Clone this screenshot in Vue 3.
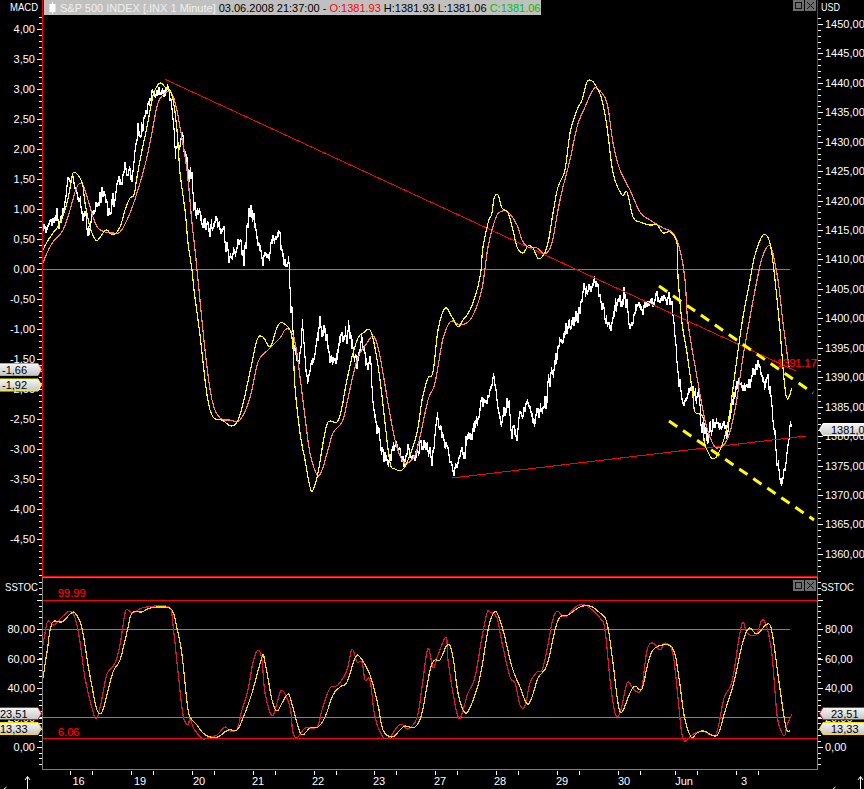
<template>
  <div class="chart">
    <!-- MACD / price panel -->
    <div class="row main">
      <svg class="axis-l" viewBox="0 0 42 577" width="42" height="577">
        <path :d="macdMinor" class="tick" />
        <path :d="macdMajor" class="tick" />
        <text x="10" y="11" class="lbl" textLength="28" lengthAdjust="spacingAndGlyphs">MACD</text>
        <text v-for="t in macdLabels" :key="t.txt" x="35" :y="t.y + 4" class="lbl end">{{ t.txt }}</text>
        <g v-for="t in macdTags" :key="t.txt">
          <polygon :points="tagLeft(t.y)" :stroke="t.color" fill="url(#tagL)" />
          <text x="2" :y="t.y + 10.5" class="tagtxt">{{ t.txt }}</text>
        </g>
        <defs>
          <linearGradient id="tagL" x1="0" y1="0" x2="0" y2="1">
            <stop offset="0" stop-color="#f6f6f6" />
            <stop offset="1" stop-color="#c6c6c6" />
          </linearGradient>
        </defs>
      </svg>

      <div class="plot plot-main">
        <svg viewBox="43 0 774 576" width="774" height="576">
          <line x1="43" y1="269.5" x2="790" y2="269.5" class="gray" />
          <path :d="pricePath" class="price" />
          <line x1="165.5" y1="79.5" x2="796" y2="371" class="red" />
          <line x1="452" y1="478" x2="806" y2="436" class="red" />
          <polyline :points="macdPink" class="pink" />
          <polyline :points="macdYellow" class="yellow" />
          <line x1="659" y1="286" x2="813" y2="393" class="dash" />
          <line x1="669" y1="421" x2="814" y2="520" class="dash" />
          <text x="777" y="367" class="redtxt">1391.17</text>
        </svg>
        <div class="head">
          <svg class="candle" viewBox="0 0 7 12" width="7" height="12">
            <rect x="3" y="0" width="1" height="12" fill="#fff" />
            <rect x="0.5" y="2" width="6" height="8" fill="#fff" />
          </svg>
          <span class="name">S&amp;P 500 INDEX [.INX  1 Minute]</span>
          <span class="stamp">03.06.2008 21:37:00 - </span>
          <span class="o">O:1381.93</span>
          <span> H:1381.93 L:1381.06 </span>
          <span class="c">C:1381.06</span>
        </div>
        <div class="winbtns">
          <svg class="btn" viewBox="0 0 11 11" width="11" height="11">
            <rect x="2.5" y="2.5" width="6" height="6" class="ico" />
          </svg>
          <svg class="btn" viewBox="0 0 11 11" width="11" height="11">
            <path d="M2 2L9 9M9 2L2 9" class="ico" />
          </svg>
        </div>
      </div>

      <svg class="axis-r" viewBox="818 0 46 577" width="46" height="577">
        <path :d="usdMinor" class="tick" />
        <path :d="usdMajor" class="tick" />
        <text x="821" y="11" class="lbl" textLength="19" lengthAdjust="spacingAndGlyphs">USD</text>
        <text v-for="t in usdLabels" :key="t.txt" x="825" :y="t.y + 4" class="lbl">{{ t.txt }}</text>
        <polygon :points="tagRight(423)" stroke="#ffffff" fill="url(#tagR)" />
        <text x="831" y="433.5" class="tagtxt">1381,00</text>
        <defs>
          <linearGradient id="tagR" x1="0" y1="0" x2="0" y2="1">
            <stop offset="0" stop-color="#f6f6f6" />
            <stop offset="1" stop-color="#c6c6c6" />
          </linearGradient>
        </defs>
      </svg>
    </div>

    <!-- Slow stochastic panel -->
    <div class="row lower">
      <svg class="axis-l" viewBox="0 577 42 193" width="42" height="193">
        <path :d="stocMinorL" class="tick" />
        <path :d="stocMajorL" class="tick" />
        <text x="5" y="591" class="lbl" textLength="33" lengthAdjust="spacingAndGlyphs">SSTOC</text>
        <text v-for="t in stocLabels" :key="t.txt" x="35" :y="t.y + 4" class="lbl end">{{ t.txt }}</text>
        <g v-for="t in stocTags" :key="t.txt">
          <polygon :points="tagLeft(t.y)" :stroke="t.color" fill="url(#tagL2)" />
          <text x="0" :y="t.y + 10.5" class="tagtxt">{{ t.txt }}</text>
        </g>
        <defs>
          <linearGradient id="tagL2" x1="0" y1="0" x2="0" y2="1">
            <stop offset="0" stop-color="#f6f6f6" />
            <stop offset="1" stop-color="#c6c6c6" />
          </linearGradient>
        </defs>
      </svg>

      <div class="plot plot-lower">
        <svg viewBox="43 578 774 191" width="774" height="191">
          <line x1="43" y1="600.5" x2="817" y2="600.5" class="red" />
          <line x1="43" y1="738.5" x2="817" y2="738.5" class="red" />
          <line x1="43" y1="629.5" x2="790" y2="629.5" class="gray" />
          <line x1="43" y1="717.5" x2="790" y2="717.5" class="gray" />
          <polyline :points="stocRed" class="crimson" />
          <polyline :points="stocGold" class="gold" />
          <text x="58" y="597" class="redtxt">99.99</text>
          <text x="58" y="736" class="redtxt">6.06</text>
        </svg>
        <div class="winbtns low">
          <svg class="btn" viewBox="0 0 11 11" width="11" height="11">
            <rect x="2.5" y="2.5" width="6" height="6" class="ico" />
          </svg>
          <svg class="btn" viewBox="0 0 11 11" width="11" height="11">
            <path d="M2 2L9 9M9 2L2 9" class="ico" />
          </svg>
        </div>
      </div>

      <svg class="axis-r" viewBox="818 577 46 193" width="46" height="193">
        <path :d="stocMinorR" class="tick" />
        <path :d="stocMajorR" class="tick" />
        <text x="821" y="591" class="lbl" textLength="33" lengthAdjust="spacingAndGlyphs">SSTOC</text>
        <text v-for="t in stocLabels" :key="t.txt" x="825" :y="t.y + 4" class="lbl">{{ t.txt }}</text>
        <g v-for="t in stocTags" :key="t.txt">
          <polygon :points="tagRight(t.y)" :stroke="t.color" fill="url(#tagL2)" />
          <text x="831" :y="t.y + 10.5" class="tagtxt">{{ t.txt }}</text>
        </g>
      </svg>
    </div>

    <!-- Time axis -->
    <svg class="time" viewBox="0 770 864 19" width="864" height="19">
      <path :d="timeTicks" class="tick" />
      <text v-for="d in days" :key="d.txt" :x="d.x" y="785" class="lbl mid">{{ d.txt }}</text>
      <path d="M27.5 789V777M25 780L27.5 776.5L30 780M860.5 789V777M858 780L860.5 776.5L863 780" class="arrow" />
      <path d="M4 789L6.5 787M833 789L835.5 787" class="arrow" />
    </svg>
  </div>
</template>

<script setup>
// line data, traced in page coordinates
const macdYellow = smooth([
  43,250, 47,242, 53,233, 60,223, 67,203, 71,183, 74,172, 82,182, 85,203, 90,227, 95,239, 98,240,
  103,233, 107,230, 113,235, 120,227, 125,210, 130,198, 134,195, 137,177, 142,150, 147,127, 152,100,
  155,90, 160,83, 165,87, 172,95, 177,130, 180,173, 185,210, 188,243, 192,270, 194,290, 200,335, 207,395,
  213,417, 222,420, 232,426, 240,415, 250,372, 257,340, 263,337, 270,347, 276,330, 280,323, 283,323, 290,330,
  293,347, 295,387, 300,433, 305,460, 310,487, 313,490, 318,473, 323,443, 328,422, 337,422, 342,407,
  345,390, 352,357, 358,338, 363,333, 370,330, 375,348, 380,380, 385,423, 390,463, 395,469, 402,470,
  408,460, 417,433, 422,400, 428,378, 433,372, 438,330, 445,308, 452,317, 458,327, 463,320, 470,310,
  477,290, 481,270, 483,247, 488,223, 492,213, 494,198, 498,195, 502,208, 508,213, 513,230, 517,247,
  523,253, 528,246, 533,248, 539,259, 547,247, 553,213, 558,187, 565,170, 570,133, 577,110, 582,100,
  587,82, 592,81, 597,88, 602,100, 607,127, 613,173, 622,195, 627,192, 633,217, 640,222, 650,225,
  657,225, 663,233, 670,232, 677,243, 678,277, 682,323, 687,353, 693,397, 695,412, 703,417, 704,440,
  707,450, 713,459, 720,450, 728,423, 735,373, 742,323, 750,280, 755,255, 763,235, 770,243, 775,280,
  780,330, 786,396, 792,388
])
const macdPink = smooth([
  43,263, 47,253, 53,242, 63,230, 70,210, 75,192, 79,184, 83,185, 88,200, 93,217, 98,228, 105,232,
  112,233, 120,232, 127,220, 133,205, 140,183, 147,157, 153,127, 158,103, 165,93, 170,92, 175,102,
  180,127, 187,170, 192,223, 195,250, 198,280, 205,350, 212,400, 220,418, 230,420, 240,420, 250,398,
  258,362, 268,350, 280,338, 285,330, 290,330, 295,342, 300,377, 305,417, 310,453, 317,475, 322,470,
  328,450, 333,433, 342,422, 347,403, 352,380, 358,357, 367,343, 373,336, 378,347, 383,373, 388,403,
  395,440, 402,460, 408,463, 415,455, 420,437, 428,400, 435,383, 442,343, 448,325, 453,321, 460,325,
  470,320, 478,303, 483,283, 488,247, 495,220, 500,212, 508,212, 517,225, 522,240, 528,247, 537,248,
  545,254, 552,243, 558,210, 563,187, 570,160, 577,127, 585,107, 593,90, 598,89, 607,103, 613,143,
  620,170, 630,190, 640,212, 650,220, 663,228, 673,233, 680,250, 685,280, 688,323, 697,377, 705,420,
  712,442, 718,448, 727,440, 735,410, 743,357, 750,317, 757,280, 762,258, 768,246, 772,250, 778,280,
  783,323, 789,367
])
const stocRed = smooth([
  43,645, 47,623, 50,622, 54,625, 62,617, 70,611, 75,618, 80,642, 85,678, 92,708, 96,719, 100,708,
  105,682, 108,672, 115,663, 120,645, 125,613, 128,610, 133,613, 142,608, 158,606, 170,608, 173,625,
  178,672, 183,715, 188,725, 190,718, 193,727, 197,733, 203,739, 210,737, 217,735, 225,727, 230,731,
  237,729, 242,710, 248,690, 253,662, 258,650, 262,660, 265,693, 272,716, 277,703, 282,690, 290,707,
  293,733, 298,737, 305,728, 317,727, 322,710, 330,688, 338,685, 347,670, 352,649, 357,662, 362,662,
  365,680, 370,680, 375,717, 383,737, 390,737, 398,726, 403,725, 408,729, 417,718, 422,687, 428,648,
  433,668, 438,655, 446,637, 448,660, 453,693, 459,719, 465,703, 468,693, 475,677, 482,637, 487,613,
  490,612, 497,618, 502,643, 510,677, 515,683, 520,705, 525,706, 530,683, 537,672, 542,670, 547,650,
  552,623, 557,611, 565,617, 577,606, 587,606, 600,618, 605,630, 610,680, 615,713, 620,713, 627,683,
  632,687, 637,692, 642,687, 647,650, 653,643, 660,650, 665,643, 672,650, 676,678, 681,728, 684,740,
  687,740, 692,735, 702,731, 711,735, 717,732, 724,698, 732,682, 739,638, 743,622, 747,633, 756,635,
  762,620, 767,628, 772,655, 777,715, 782,733, 785,735, 787,725, 792,714
])
const stocGold = smooth([
  43,678, 47,652, 52,623, 62,622, 70,614, 75,613, 82,628, 88,665, 95,702, 98,712, 102,712, 107,695,
  113,672, 120,660, 127,632, 132,613, 142,612, 150,608, 163,607, 172,610, 177,628, 182,655, 187,702,
  190,717, 197,725, 203,733, 210,737, 218,737, 228,730, 237,730, 243,718, 252,693, 262,657, 265,662,
  272,700, 277,711, 282,703, 287,695, 290,697, 297,723, 302,735, 310,728, 318,727, 325,717, 333,695,
  340,687, 347,682, 355,658, 360,657, 370,675, 378,705, 383,730, 392,737, 400,730, 405,726, 415,727,
  422,713, 430,670, 435,660, 440,660, 448,644, 453,657, 458,693, 465,713, 472,703, 480,677, 488,630,
  493,614, 497,613, 503,630, 512,667, 520,687, 527,704, 532,697, 538,678, 547,665, 555,630, 560,617,
  568,615, 580,607, 590,606, 600,613, 607,623, 613,663, 618,703, 622,712, 630,693, 635,686, 642,689,
  648,663, 655,648, 672,647, 679,678, 684,715, 691,737, 697,733, 704,731, 714,736, 719,732, 726,708,
  734,682, 742,645, 749,628, 757,634, 767,624, 772,632, 779,682, 786,728, 790,730
])
const priceKeys = [
  43,230, 50,227, 57,217, 63,213, 67,180, 72,180, 77,193, 82,210, 87,227, 93,210, 102,193, 108,207,
  115,193, 123,170, 132,173, 135,147, 140,127, 147,107, 152,93, 157,93, 167,88, 172,107, 175,150,
  182,140, 187,167, 192,180, 193,210, 200,217, 210,233, 215,223, 223,233, 230,257, 240,240, 243,260,
  250,210, 257,233, 262,263, 270,247, 278,233, 283,260, 288,267, 289,285, 290,300, 292,323, 293,340,
  298,363, 302,333, 307,380, 312,360, 315,343, 320,327, 325,333, 332,367, 342,343, 348,327, 355,360,
  360,343, 365,370, 370,350, 372,393, 375,417, 380,440, 388,463, 395,443, 403,460, 408,443, 412,463,
  420,443, 427,450, 432,457, 437,413, 443,437, 447,447, 453,473, 462,447, 470,443, 478,420, 480,403,
  487,400, 493,378, 500,423, 507,407, 515,440, 520,420, 528,400, 533,423, 540,410, 545,400, 550,375,
  555,365, 560,345, 567,328, 578,315, 583,290, 597,283, 602,310, 610,327, 615,310, 623,297, 630,327,
  637,307, 650,303, 657,297, 663,297, 672,300, 673,323, 678,377, 683,403, 688,390, 695,395, 698,395,
  703,430, 708,437, 718,418, 727,433, 732,403, 738,380, 747,390, 757,363, 765,387, 770,390, 772,420,
  777,460, 782,490, 787,450, 791,420
]

// catmull-rom through the traced points, the indicators are smooth curves
function smooth(list) {
  const pts = []
  for (let i = 0; i < list.length; i += 2) pts.push([list[i], list[i + 1]])
  let out = []
  for (let i = 0; i < pts.length - 1; i++) {
    const p0 = pts[Math.max(i - 1, 0)]
    const p1 = pts[i]
    const p2 = pts[i + 1]
    const p3 = pts[Math.min(i + 2, pts.length - 1)]
    for (let s = 0; s < 4; s++) {
      const t = s / 4
      const t2 = t * t
      const t3 = t2 * t
      const x = 0.5 * (2 * p1[0] + (p2[0] - p0[0]) * t + (2 * p0[0] - 5 * p1[0] + 4 * p2[0] - p3[0]) * t2 + (3 * p1[0] - p0[0] - 3 * p2[0] + p3[0]) * t3)
      const y = 0.5 * (2 * p1[1] + (p2[1] - p0[1]) * t + (2 * p0[1] - 5 * p1[1] + 4 * p2[1] - p3[1]) * t2 + (3 * p1[1] - p0[1] - 3 * p2[1] + p3[1]) * t3)
      out.push(x.toFixed(1) + ',' + y.toFixed(1))
    }
  }
  const last = pts[pts.length - 1]
  out.push(last[0] + ',' + last[1])
  return out.join(' ')
}

// the price is a noisy one minute line, so jitter it around the traced keys
function buildPrice() {
  let seed = 77
  const rnd = () => {
    seed = (seed * 16807) % 2147483647
    return seed / 2147483647
  }
  let d = ''
  let k = 0
  let noise = 0
  let amp = 1
  let prev = priceKeys[1]
  for (let x = 43; x <= 791; x += 0.5) {
    while (k < priceKeys.length - 4 && priceKeys[k + 2] < x) k += 2
    const x0 = priceKeys[k]
    const x1 = priceKeys[k + 2]
    const t = x1 === x0 ? 0 : (x - x0) / (x1 - x0)
    const y = priceKeys[k + 1] + (priceKeys[k + 3] - priceKeys[k + 1]) * t
    // quiet and busy stretches, with short spikes
    if (rnd() < 0.08) amp = 0.5 + rnd() * 1.3
    noise = noise * 0.6 + (rnd() - 0.5) * 11 * amp
    const mid = y + noise
    const top = Math.min(prev, mid) - 1
    const bottom = Math.max(prev, mid) + 1
    d += 'M' + x + ' ' + top.toFixed(1) + 'V' + bottom.toFixed(1)
    prev = mid
  }
  return d
}
const pricePath = buildPrice()

function ticks(start, end, step, x1, x2) {
  let d = ''
  const count = Math.round((end - start) / step)
  for (let i = 0; i <= count; i++) {
    const y = Math.round(start + i * step) + 0.5
    d += 'M' + x1 + ' ' + y + 'H' + x2
  }
  return d
}

// left MACD scale: 60px per 1.00, right price scale: 5.887px per 1 USD
const macdMinor = ticks(17, 575, 6, 39, 42)
const macdMajor = ticks(29, 539, 30, 37, 42)
const macdLabels = []
for (let v = 400; v >= -450; v -= 50) {
  const txt = (v / 100).toFixed(2).replace('.', ',')
  macdLabels.push({ txt, y: 269 - (v / 100) * 60 })
}
const macdTags = [
  { txt: '-1,66', y: 363, color: '#ff8080' },
  { txt: '-1,92', y: 378.5, color: '#ffff00' }
]

const usdMinor = ticks(18.1, 575, 5.887, 818, 821)
const usdMajor = ticks(24, 554, 29.435, 818, 823)
const usdLabels = []
for (let v = 1450; v >= 1360; v -= 5) {
  usdLabels.push({ txt: v + ',00', y: 24 + (1450 - v) * 5.887 })
}

const stocMinorL = ticks(582, 767, 5.88, 39, 42)
const stocMajorL = ticks(600, 747, 29.4, 37, 42)
const stocMinorR = ticks(582, 767, 5.88, 818, 821)
const stocMajorR = ticks(600, 747, 29.4, 818, 823)
const stocLabels = []
for (let v = 80; v >= 0; v -= 20) {
  stocLabels.push({ txt: v + ',00', y: 747 - v * 1.47 })
}
const stocTags = [
  { txt: '23,51', y: 707, color: '#dc143c' },
  { txt: '13,33', y: 722, color: '#ffd700' }
]

function tagLeft(y) {
  const t = y + 0.5
  const b = y + 12.5
  return `-1,${t} 38,${t} 41.5,${y + 6.5} 38,${b} -1,${b}`
}
function tagRight(y) {
  const t = y + 0.5
  const b = y + 12.5
  return `866,${t} 823,${t} 819.5,${y + 6.5} 823,${b} 866,${b}`
}

const days = [
  { txt: '16', x: 78.5 }, { txt: '19', x: 140 }, { txt: '20', x: 199 }, { txt: '21', x: 258 },
  { txt: '22', x: 318 }, { txt: '23', x: 379 }, { txt: '27', x: 440 }, { txt: '28', x: 500 },
  { txt: '29', x: 562 }, { txt: '30', x: 624 }, { txt: 'Jun', x: 684 }, { txt: '3', x: 744 }
]
const tickXs = [70, 92, 131, 153, 192, 214, 253, 275, 314, 336, 374, 396, 435, 457, 496, 518, 557, 579, 618, 640, 675, 697, 736, 758]
const timeTicks = tickXs.map((x) => 'M' + (x + 0.5) + ' 771V775').join('')
</script>

<style scoped>
.chart {
  width: 864px;
  height: 789px;
  background: #000;
  display: flex;
  flex-direction: column;
  overflow: hidden;
}
.row {
  display: flex;
}
.main {
  height: 577px;
}
.lower {
  height: 193px;
}
svg {
  display: block;
  flex: none;
}
.plot {
  position: relative;
  width: 776px;
  box-sizing: border-box;
}
.plot-main {
  border-left: 1px solid #ff0000;
  border-right: 1px solid #ff0000;
  border-bottom: 1px solid #ff0000;
}
.plot-lower {
  border: 1px solid #808080;
}
.head {
  position: absolute;
  left: 1px;
  top: 0;
  width: 497px;
  height: 15px;
  box-sizing: border-box;
  padding-left: 5px;
  background: #c0c0c0;
  display: flex;
  align-items: center;
  font: 11px "Liberation Sans", Arial, sans-serif;
  color: #000;
  white-space: pre;
}
.candle {
  margin-right: 4px;
}
.name {
  color: #efefef;
  margin-right: 3px;
}
.o {
  color: #ff0000;
}
.c {
  color: #00c000;
}
.winbtns {
  position: absolute;
  right: 1px;
  top: 0;
  display: flex;
  gap: 1px;
}
.winbtns.low {
  top: 2px;
}
.btn {
  background: #6e6e6e;
}
.ico {
  fill: none;
  stroke: #111;
  stroke-width: 1;
}
.lbl {
  font: 11px "Liberation Sans", Arial, sans-serif;
  fill: #fff;
}
.end {
  text-anchor: end;
}
.mid {
  text-anchor: middle;
}
.tagtxt {
  font: 11px "Liberation Sans", Arial, sans-serif;
  fill: #000;
}
.redtxt {
  font: 11px "Liberation Sans", Arial, sans-serif;
  fill: #ff0000;
  stroke: #ff0000;
  stroke-width: 0.25;
}
.tick {
  stroke: #fff;
  stroke-width: 1;
  fill: none;
  shape-rendering: crispEdges;
}
.arrow {
  stroke: #fff;
  stroke-width: 1;
  fill: none;
}
.gray {
  stroke: #808080;
  stroke-width: 1;
  shape-rendering: crispEdges;
}
.red {
  stroke: #ff0000;
  stroke-width: 1;
  shape-rendering: crispEdges;
}
.price {
  stroke: #fff;
  stroke-width: 1;
  fill: none;
  shape-rendering: crispEdges;
}
.pink,
.yellow,
.crimson,
.gold {
  fill: none;
  stroke-width: 1.2;
  stroke-linejoin: round;
  shape-rendering: crispEdges;
}
.pink {
  stroke: #ff8080;
}
.yellow {
  stroke: #ffff00;
}
.crimson {
  stroke: #dc143c;
}
.gold {
  stroke: #ffd700;
}
.dash {
  stroke: #ffff00;
  stroke-width: 3;
  stroke-dasharray: 10 7;
}
</style>
